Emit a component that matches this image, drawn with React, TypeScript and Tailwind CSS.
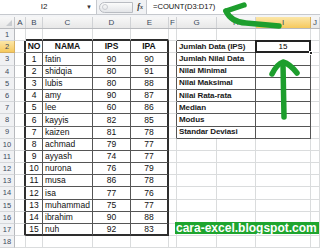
import React from "react";

const COLS = ["A", "B", "C", "D", "E", "F", "G", "H", "I", "J"];
const WIDTHS = ["w-[11px]", "w-[17px]", "w-[50px]", "w-[38px]", "w-[38px]", "w-[8px]", "w-[40px]", "w-[39px]", "w-[55px]", "w-[9px]"];

const data: [number, string, number, number][] = [
  [1, "fatin", 90, 90],
  [2, "shidqia", 80, 91],
  [3, "lubis", 80, 88],
  [4, "amy", 90, 87],
  [5, "lee", 60, 86],
  [6, "kayyis", 82, 85],
  [7, "kaizen", 81, 78],
  [8, "achmad", 79, 77],
  [9, "ayyash", 74, 77],
  [10, "nurona", 76, 79],
  [11, "musa", 86, 78],
  [12, "isa", 77, 76],
  [13, "muhammad", 75, 77],
  [14, "ibrahim", 90, 88],
  [15, "nuh", 92, 83],
];

const labels = [
  "Jumlah Data (IPS)",
  "Jumlah Nilai Data",
  "Nilai Minimal",
  "Nilai Maksimal",
  "Nilai Rata-rata",
  "Median",
  "Modus",
  "Standar Deviasi",
];

// border classes per cell, c = 0..9 (A..J), r = 1..18
function borderCls(r: number, c: number) {
  const inTable = r >= 2 && r <= 17 && c >= 1 && c <= 4;
  const inStats = r >= 2 && r <= 9 && c >= 6 && c <= 8;
  let right = "border-r border-r-[#dadcdd]";
  let bottom = "border-b border-b-[#dadcdd]";
  if (inTable) {
    right = c === 4 ? "border-r-2 border-r-[#2e2e2e]" : "border-r border-r-[#555]";
    bottom = r === 17 ? "border-b-2 border-b-[#2e2e2e]" : "border-b border-b-[#555]";
  }
  if (c === 0 && r >= 2 && r <= 17) right = "border-r-2 border-r-[#2e2e2e]";
  if (r === 1 && c >= 1 && c <= 4) bottom = "border-b-2 border-b-[#2e2e2e]";
  if (inStats) {
    right = "border-r border-r-[#555]";
    bottom = "border-b border-b-[#555]";
  }
  if (c === 5 && r >= 2 && r <= 9) right = "border-r border-r-[#555]";
  if (r === 1 && c >= 6 && c <= 8) bottom = "border-b border-b-[#555]";
  return right + " " + bottom;
}

function Cell({ r, c }: { r: number; c: number }) {
  let content: React.ReactNode = null;
  let align = "justify-center";
  let weight = "font-normal";
  if (r === 2 && c >= 1 && c <= 4) {
    content = ["NO", "NAMA", "IPS", "IPA"][c - 1];
    weight = "font-bold";
  }
  if (r >= 3 && r <= 17 && c >= 1 && c <= 4) {
    const d = data[r - 3];
    content = d[c - 1];
    if (c === 2) align = "justify-start pl-[2px]";
  }
  if (r === 2 && c === 8) content = "15";

  if (c === 6 && r >= 2 && r <= 9) {
    return (
      <div className={"flex items-center h-full w-[79px] pl-[2px] text-[8px] font-bold tracking-[-0.1px] text-[#1a1a1a] " + borderCls(r, 6)}>
        {labels[r - 2]}
      </div>
    );
  }
  if (c === 7 && r >= 2 && r <= 9) return null;

  if (r === 2 && c === 8) {
    return (
      <div className={"relative flex items-center justify-center h-full text-[8px] " + WIDTHS[c] + " " + borderCls(r, c)}>
        <div className="absolute -left-[1px] -top-[1px] w-[56px] h-[calc(100%+2px)] border-2 border-[#222]" />
        <div className="absolute -right-[3px] -bottom-[3px] w-[4px] h-[4px] bg-[#222] border border-white" />
        {content}
      </div>
    );
  }

  return (
    <div className={"flex items-center h-full text-[8.5px] text-[#111] " + align + " " + weight + " " + WIDTHS[c] + " " + borderCls(r, c)}>
      {content}
    </div>
  );
}

export default function App() {
  const rows = Array.from({ length: 18 }, (_, i) => i + 1);
  return (
    <div className="relative w-[320px] h-[249px] overflow-hidden bg-white text-black font-['Liberation_Sans',Arial,sans-serif]">
      {/* formula bar */}
      <div className="flex h-[15px] border-b border-[#c6c9ce] bg-white">
        <div className="flex items-center w-[97px] border-r border-[#c6c9ce]">
          <span className="flex-1 text-center text-[8px] text-[#222] pl-[2px]">I2</span>
          <span className="w-[10px] text-[6px] text-[#333]">▼</span>
        </div>
        <div className="flex items-center w-[50px] bg-[#f1f2f4] border-r border-[#c6c9ce]">
          <div className="flex items-center h-[11px] w-[34px] ml-[2px] rounded-l-full border border-[#b9bcc2] bg-gradient-to-b from-[#fbfbfb] to-[#e3e5e8]">
            <div className="w-[6px] h-[6px] ml-[2px] rounded-full border border-[#c9cbd0]" />
          </div>
          <span className="ml-auto mr-[3px] text-[8px] italic font-['Liberation_Serif',serif] font-bold text-[#333]">
            f<span className="text-[6px]">x</span>
          </span>
        </div>
        <div className="flex items-center flex-1 pl-[6px] text-[7.6px] text-[#111]">=COUNT(D3:D17)</div>
      </div>
      <div className="h-[2px] bg-[#f3f4f6]" />

      {/* column headers */}
      <div className="flex h-[12px] bg-gradient-to-b from-[#f7f7f7] to-[#e8e8e8] border-b border-[#b7b9bd] text-[8px] text-[#3c4a5c]">
        <div className="relative w-[15px] border-r border-[#c4c6ca]">
          <div className="absolute right-[2px] bottom-[2px] w-0 h-0 border-l-[6px] border-l-transparent border-b-[6px] border-b-[#c9ccd0]" />
        </div>
        {COLS.map((l, i) =>
          l === "I" ? (
            <div key={l} className={"flex items-center justify-center bg-gradient-to-b from-[#fbe6a7] to-[#f6c95b] border-r border-[#d8b060] " + WIDTHS[i]}>
              {l}
            </div>
          ) : (
            <div key={l} className={"flex items-center justify-center border-r border-[#d0d2d5] " + WIDTHS[i]}>
              {l}
            </div>
          )
        )}
      </div>

      {/* rows */}
      {rows.map((r) => (
        <div key={r} className="flex h-[12.2px]">
          {r === 2 ? (
            <div className="flex items-center justify-center w-[15px] bg-gradient-to-b from-[#fbe6a7] to-[#f6c95b] border-r border-b border-[#d8b060] text-[7.5px] text-[#3c4a5c]">
              {r}
            </div>
          ) : (
            <div className="flex items-center justify-center w-[15px] bg-[#f0f1f3] border-r border-r-[#b7b9bd] border-b border-b-[#d5d7da] text-[7.5px] text-[#3c4a5c]">
              {r}
            </div>
          )}
          {COLS.map((_, c) => (
            <Cell key={c} r={r} c={c} />
          ))}
        </div>
      ))}

      {/* annotations drawn over the screenshot */}
      <svg className="absolute inset-0 pointer-events-none" width="320" height="249" viewBox="0 0 320 249">
        <g fill="none" stroke="#1d9e2d" strokeWidth="5.5" strokeLinecap="round" strokeLinejoin="round">
          <path d="M226 11 L244 5" />
          <path d="M226 11 Q231 22 246 23 L279 26" />
          <path d="M272 74 Q277 64 283 62 Q290 64 297 73" />
          <path d="M283 64 L284 117" />
        </g>
      </svg>
      <div className="absolute left-[175px] top-[222px] h-[12px] pl-[1px] pr-[2px] bg-[#1ea52e] text-white font-bold text-[12px] leading-[12px] whitespace-nowrap">
        cara-excel.blogspot.com
      </div>
    </div>
  );
}
